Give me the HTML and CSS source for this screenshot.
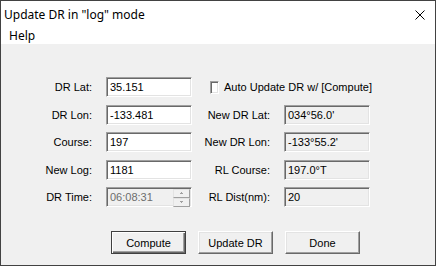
FILE: index.html
```html
<!DOCTYPE html>
<html>
<head>
<meta charset="utf-8">
<link rel="stylesheet" href="styles.css">
</head>
<body>
<div class="window">
  <div class="titlebar">
    <span class="title">Update DR in "log" mode</span>
    <svg class="close" width="10" height="10" viewBox="0 0 10 10"><path d="M0.5 0.5 L9.5 9.5 M9.5 0.5 L0.5 9.5" stroke="#000" stroke-width="1" fill="none"/></svg>
  </div>
  <div class="menubar"><span class="menu">Help</span></div>
  <div class="body">
    <div class="grid">
      <div class="label">DR Lat:</div>
      <div class="field">35.151</div>
      <label class="check"><span class="box"></span><span>Auto Update DR w/ [Compute]</span></label>

      <div class="label">DR Lon:</div>
      <div class="field">-133.481</div>
      <div class="label">New DR Lat:</div>
      <div class="field ro">034°56.0'</div>

      <div class="label">Course:</div>
      <div class="field">197</div>
      <div class="label">New DR Lon:</div>
      <div class="field ro">-133°55.2'</div>

      <div class="label">New Log:</div>
      <div class="field">1181</div>
      <div class="label">RL Course:</div>
      <div class="field ro">197.0°T</div>

      <div class="label">DR Time:</div>
      <div class="field ro spin"><span class="dis">06:08:31</span>
        <span class="spinbtns">
          <span class="sb"><svg width="5" height="3" viewBox="0 0 5 3"><path d="M2 0h1v1h1v1h-3v-1h1z" fill="#a0a0a0"/></svg></span>
          <span class="sb"><svg width="5" height="3" viewBox="0 0 5 3"><path d="M1 0h3v1h-1v1h-1v-1h-1z" fill="#a0a0a0"/></svg></span>
        </span>
      </div>
      <div class="label">RL Dist(nm):</div>
      <div class="field ro">20</div>
    </div>
    <div class="buttons">
      <div class="btn default">Compute</div>
      <div class="btn">Update DR</div>
      <div class="btn">Done</div>
    </div>
  </div>
</div>
</body>
</html>
```
FILE: styles.css
```css
html, body { margin: 0; padding: 0; }
body { width: 436px; height: 266px; overflow: hidden; background: #f0f0f0; }
.window {
  box-sizing: border-box;
  width: 436px; height: 266px;
  border: 1px solid #424242;
  background: #f0f0f0;
  display: flex; flex-direction: column;
  font-family: "Liberation Sans", Arial, sans-serif;
  font-size: 11px;
  color: #000;
}
.titlebar {
  height: 26px;
  background: #fff;
  display: flex; align-items: center; justify-content: space-between;
  font-family: "Noto Sans", "Open Sans", sans-serif;
  font-size: 12px;
}
.title { padding-left: 3px; }
.close { margin-right: 10px; margin-top: 1px; }
.menubar {
  height: 17px;
  background: #fff;
  display: flex; align-items: center;
  font-family: "Noto Sans", "Open Sans", sans-serif;
  font-size: 12px;
}
.menu { padding-left: 8px; }
.body { flex: 1; display: flex; flex-direction: column; }
.grid {
  margin-top: 33px;
  display: grid;
  grid-template-columns: 91px 100px 78px 102px;
  grid-template-rows: 28px 27px 28px 27px 20px;
  align-items: start;
}
.label {
  height: 20px; line-height: 20px;
  text-align: right;
  white-space: nowrap;
}
.grid > .field { margin-left: 14px; }
.grid > .field:nth-child(4n) { margin-left: 16px; }
.field {
  box-sizing: border-box;
  width: 86px; height: 20px;
  background: #fff;
  border: 1px solid;
  border-color: #a0a0a0 #fff #fff #a0a0a0;
  box-shadow: inset 1px 1px 0 #696969, inset -1px -1px 0 #e3e3e3;
  padding-left: 3px;
  line-height: 18px;
  white-space: nowrap;
  position: relative;
}
.field.ro { background: #f0f0f0; }
.dis { color: #6d6d6d; }
.check {
  grid-column: 3 / 5;
  display: flex; align-items: center;
  height: 20px;
  margin-left: 18px;
  white-space: nowrap;
}
.box {
  box-sizing: border-box;
  width: 13px; height: 13px;
  background: #fff;
  border: 1px solid;
  border-color: #a0a0a0 #fff #fff #a0a0a0;
  box-shadow: inset 1px 1px 0 #696969, inset -1px -1px 0 #e3e3e3;
  margin-right: 5px;
}
.spinbtns {
  position: absolute; right: 1px; top: 1px;
  display: flex; flex-direction: column;
}
.sb {
  box-sizing: border-box;
  width: 17px; height: 9px;
  background: #f0f0f0;
  border: 1px solid;
  border-color: #e3e3e3 #a0a0a0 #a0a0a0 #e3e3e3;
  display: flex; align-items: center; justify-content: center;
}
.sb svg { display: block; }
.buttons {
  display: flex; gap: 12px;
  margin-top: 24px;
  padding-left: 110px;
}
.btn {
  box-sizing: border-box;
  width: 75px; height: 23px;
  border: 1px solid;
  border-color: #fff #696969 #696969 #fff;
  box-shadow: inset -1px -1px 0 #a0a0a0, inset 1px 1px 0 #e3e3e3;
  display: flex; align-items: center; justify-content: center;
  background: #f0f0f0;
}
.btn.default {
  border-color: #404040;
  box-shadow: inset 1px 1px 0 #fff, inset -1px -1px 0 #696969, inset -2px -2px 0 #a0a0a0;
}
```
